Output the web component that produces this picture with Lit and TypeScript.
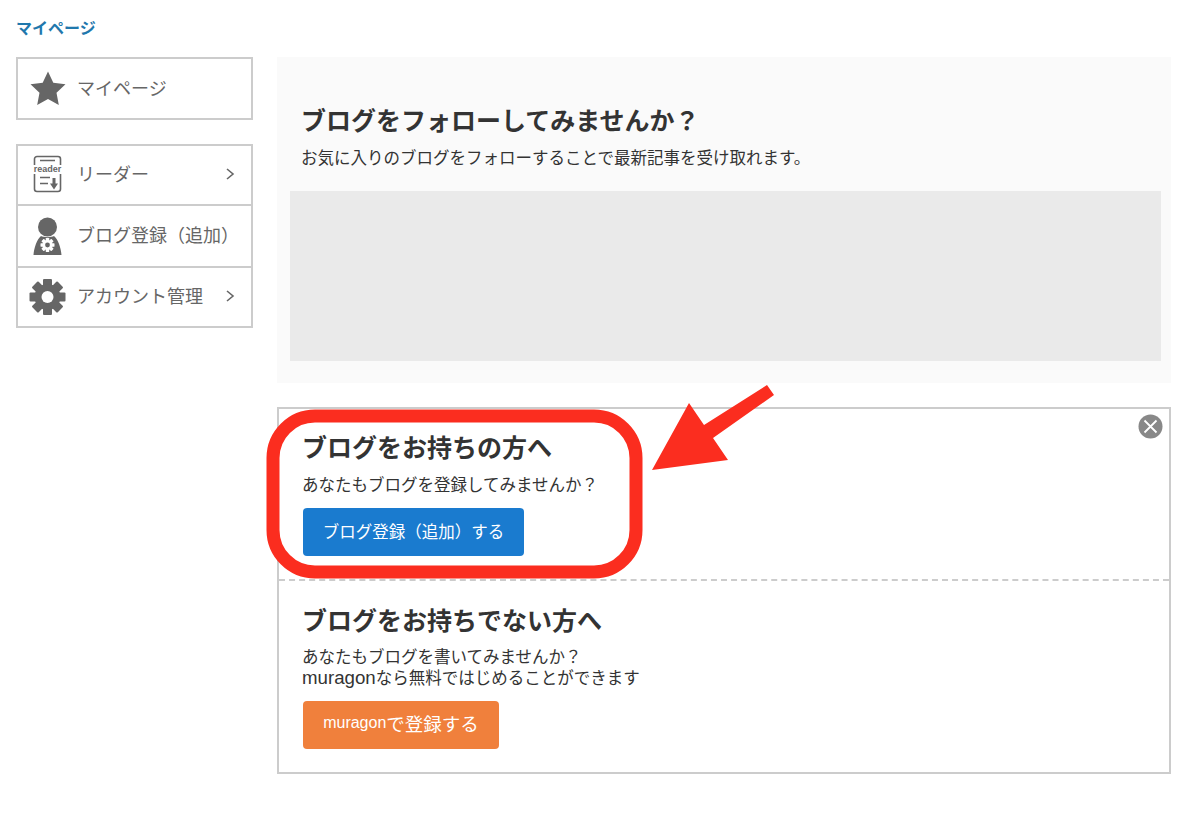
import { LitElement, html, css, svg } from 'lit';
import { customElement } from 'lit/decorators.js';

// gear outline shared by the account row and the small one on the person icon
const gear = (cx: number, cy: number, r: number, hole: number, fill: string, holeFill: string) => {
  const teeth = [0, 45, 90, 135, 180, 225, 270, 315];
  const w = r * 0.5;
  return svg`
    <g fill=${fill}>
      ${teeth.map(
        (a) => svg`<rect x=${cx - w / 2} y=${cy - r} width=${w} height=${r * 0.5} rx=${r * 0.06} transform="rotate(${a} ${cx} ${cy})"></rect>`
      )}
      <circle cx=${cx} cy=${cy} r=${r * 0.72}></circle>
    </g>
    <circle cx=${cx} cy=${cy} r=${hole} fill=${holeFill}></circle>`;
};

@customElement('app-root')
export class AppRoot extends LitElement {
  static styles = css`
    :host {
      display: block;
      position: relative;
      width: 1200px;
      height: 817px;
      overflow: hidden;
      background: #fff;
      color: #333;
      font-family: 'Liberation Sans', 'Noto Sans CJK JP', sans-serif;
    }
    .layout {
      display: grid;
      grid-template-columns: 237px 894px;
      column-gap: 24px;
      padding: 57px 0 0 16px;
    }
    .crumb {
      position: absolute;
      left: 16px;
      top: 18px;
      margin: 0;
      font-size: 16px;
      line-height: 22px;
      font-weight: 700;
      color: #1f78ad;
    }
    .side {
      display: flex;
      flex-direction: column;
      gap: 24px;
    }
    .menu {
      border: 2px solid #ccc;
      display: flex;
      flex-direction: column;
    }
    .row {
      display: flex;
      align-items: center;
      height: 60px;
      box-sizing: border-box;
      font-size: 18px;
      color: #666;
      padding-left: 11px;
    }
    .single .row {
      height: 59px;
    }
    .row + .row {
      border-top: 2px solid #ccc;
    }
    .row.top {
      height: 58px;
    }
    .row.tall {
      height: 62px;
    }
    .row svg.icon {
      width: 38px;
      height: 40px;
      flex: none;
      margin-right: 10px;
    }
    .row .label {
      flex: 1;
      white-space: nowrap;
      padding-bottom: 5px;
    }
    .single .row .label {
      padding-bottom: 3px;
    }
    .row svg.chev {
      width: 10px;
      height: 14px;
      margin: 0 16px 2px 0;
      flex: none;
    }
    .main {
      display: flex;
      flex-direction: column;
      gap: 24px;
    }
    .follow {
      background: #fafafa;
      height: 326px;
      padding: 47px 10px 22px 13px;
      box-sizing: border-box;
    }
    h2 {
      margin: 0 0 0 -1px;
      font-size: 25px;
      line-height: 34px;
      font-weight: 700;
      color: #333;
    }
    p {
      margin: 0 0 0 -1px;
      font-size: 16.5px;
      line-height: 21px;
      color: #333;
    }
    .follow h2,
    .follow p {
      margin-left: 11px;
    }
    .follow p {
      margin-top: 10px;
    }
    .grey {
      height: 170px;
      margin-top: 22px;
      background: #eaeaea;
    }
    .box {
      position: relative;
      border: 2px solid #ccc;
      height: 367px;
      box-sizing: border-box;
    }
    .close {
      position: absolute;
      top: 5px;
      right: 6px;
      width: 25px;
      height: 25px;
    }
    .sect {
      padding: 22px 24px 0;
      box-sizing: border-box;
    }
    .sect.first {
      height: 172px;
      border-bottom: 2px dashed #ccc;
    }
    .sect.second {
      padding-top: 23px;
    }
    .sect p {
      margin-top: 10px;
    }
    .sect.second p {
      margin-top: 9px;
    }
    p .latin {
      font-size: 18.7px;
      line-height: 1;
    }
    .btn {
      display: inline-flex;
      align-items: center;
      justify-content: center;
      height: 48px;
      margin-top: 12px;
      padding-bottom: 3px;
      border-radius: 4px;
      color: #fff;
      font-size: 16.5px;
      box-sizing: border-box;
    }
    .btn.blue {
      width: 221px;
      background: #1a7bcf;
    }
    .btn.orange {
      width: 196px;
      background: #f0803c;
      font-size: 18.5px;
      white-space: pre;
      padding-bottom: 5px;
    }
    .btn.orange .latin {
      font-size: 16px;
    }
    .note {
      position: absolute;
      left: 0;
      top: 0;
      pointer-events: none;
    }
  `;

  render() {
    return html`
      <h1 class="crumb">マイページ</h1>
      <div class="layout">
        <div class="side">
          <div class="menu single">
            <div class="row">
              <svg class="icon" viewBox="0 0 38 40">
                <path fill="#666" d="M19 2.500l5.300 11.300 12.200 1.500-9 8.400 2.300 12.300L19 30 8.200 36l2.300-12.300-9-8.400 12.200-1.500z"></path>
              </svg>
              <span class="label">マイページ</span>
            </div>
          </div>
          <div class="menu">
            <div class="row top">
              <svg class="icon" viewBox="0 0 38 40">
                <g fill="none" stroke="#666" stroke-width="1.600">
                  <path d="M5.500 10V4a2.500 2.500 0 0 1 2.500-2.500h21a2.500 2.500 0 0 1 2.500 2.500v6"></path>
                  <path d="M5.500 19v15a2.500 2.500 0 0 0 2.500 2.500h21a2.500 2.500 0 0 0 2.500-2.500V19"></path>
                  <path d="M11 5.500h15M11 22.500h10M11 28.500h8"></path>
                </g>
                <text x="18.500" y="17" text-anchor="middle" font-size="9" font-weight="700" fill="#666" font-family="'Liberation Sans', sans-serif">reader</text>
                <path fill="#666" d="M23.500 23h3v5.500h2.500L25 34.500l-4-6h2.500z"></path>
              </svg>
              <span class="label">リーダー</span>
              <svg class="chev" viewBox="0 0 10 14"><path d="M2 2l6 5-6 5" fill="none" stroke="#666" stroke-width="1.600"></path></svg>
            </div>
            <div class="row tall">
              <svg class="icon" viewBox="0 0 38 40">
                <circle cx="18.500" cy="11" r="9.500" fill="#666"></circle>
                <path fill="#666" d="M12 20c2 1.500 11 1.500 13 0 4 3 7 12 7.500 19h-28C5 32 8 23 12 20z"></path>
                ${gear(18.5, 29, 7, 2.4, '#fff', '#666')}
              </svg>
              <span class="label">ブログ登録（追加）</span>
            </div>
            <div class="row">
              <svg class="icon" viewBox="0 0 38 40">${gear(18.5, 20, 18, 6, '#666', '#fff')}</svg>
              <span class="label">アカウント管理</span>
              <svg class="chev" viewBox="0 0 10 14"><path d="M2 2l6 5-6 5" fill="none" stroke="#666" stroke-width="1.600"></path></svg>
            </div>
          </div>
        </div>
        <div class="main">
          <section class="follow">
            <h2>ブログをフォローしてみませんか？</h2>
            <p>お気に入りのブログをフォローすることで最新記事を受け取れます。</p>
            <div class="grey"></div>
          </section>
          <section class="box">
            <svg class="close" viewBox="0 0 25 25">
              <circle cx="12.500" cy="12.500" r="12" fill="#888"></circle>
              <path d="M6.500 6.500l12 12M18.500 6.500l-12 12" stroke="#fff" stroke-width="1.800"></path>
            </svg>
            <div class="sect first">
              <h2>ブログをお持ちの方へ</h2>
              <p>あなたもブログを登録してみませんか？</p>
              <div class="btn blue">ブログ登録（追加）する</div>
            </div>
            <div class="sect second">
              <h2>ブログをお持ちでない方へ</h2>
              <p>あなたもブログを書いてみませんか？<br /><span class="latin">muragon</span>なら無料ではじめることができます</p>
              <div class="btn orange"><span class="latin">muragon</span><span>で登録する</span></div>
            </div>
          </section>
        </div>
      </div>
      <svg class="note" width="1200" height="817" viewBox="0 0 1200 817">
        <rect x="273" y="416" width="363" height="156" rx="42" fill="none" stroke="#fb2d1f" stroke-width="13"></rect>
        <path fill="#fb2d1f" d="M652 470L689 403 704 425 767 385 774 395 713 438 728 460z"></path>
      </svg>
    `;
  }
}
